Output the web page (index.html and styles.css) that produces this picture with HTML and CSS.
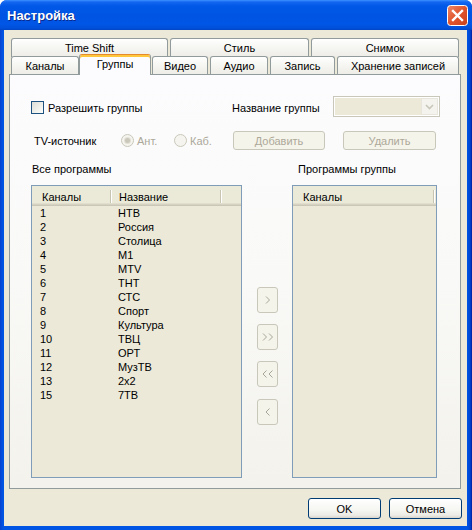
FILE: index.html
```html
<!DOCTYPE html>
<html>
<head>
<meta charset="utf-8">
<link rel="stylesheet" href="styles.css">
</head>
<body>
<div class="window">
  <div class="titlebar">
    <span class="title">Настройка</span>
    <div class="close">
      <svg width="21" height="21" viewBox="0 0 21 21">
        <defs>
          <linearGradient id="cg" x1="0" y1="0" x2="1" y2="1">
            <stop offset="0" stop-color="#EE8A6A"/>
            <stop offset="0.5" stop-color="#E0542C"/>
            <stop offset="1" stop-color="#C8401C"/>
          </linearGradient>
        </defs>
        <rect x="0.5" y="0.5" width="20" height="20" rx="3" fill="url(#cg)" stroke="#FFFFFF"/>
        <path d="M6 6 L15 15 M15 6 L6 15" stroke="#FFFFFF" stroke-width="2.4" stroke-linecap="square"/>
      </svg>
    </div>
  </div>
  <div class="client">
    <div class="tabs">
      <div class="tabrow row1">
        <div class="tab t-ts">Time Shift</div>
        <div class="tab t-style">Стиль</div>
        <div class="tab t-snap">Снимок</div>
      </div>
      <div class="tabrow row2">
        <div class="tab t-chan">Каналы</div>
        <div class="tab sel t-grp">Группы</div>
        <div class="tab t-vid">Видео</div>
        <div class="tab t-aud">Аудио</div>
        <div class="tab t-rec">Запись</div>
        <div class="tab t-store">Хранение записей</div>
      </div>
    </div>
    <div class="panel">
      <div class="row-a">
        <div class="chk-wrap"><span class="checkbox"></span><span>Разрешить группы</span></div>
        <div class="lbl-name">Название группы</div>
        <div class="combo">
          <div class="combo-field"></div>
          <div class="combo-btn">
            <svg width="9" height="6" viewBox="0 0 9 6"><polyline points="1,1 4.5,4.5 8,1" fill="none" stroke="#C9C7BA" stroke-width="1.6"/></svg>
          </div>
        </div>
      </div>
      <div class="row-b">
        <div class="tvsrc">TV-источник</div>
        <div class="radio r-ant"><span class="circle on"></span><span class="dis">Ант.</span></div>
        <div class="radio r-kab"><span class="circle"></span><span class="dis">Каб.</span></div>
        <div class="dbtn b-add">Добавить</div>
        <div class="dbtn b-del">Удалить</div>
      </div>
      <div class="row-c">
        <div class="lbl-all">Все программы</div>
        <div class="lbl-grp">Программы группы</div>
      </div>
      <div class="lists">
        <div class="list list-left">
          <div class="lhead">
            <div class="hc hc1">Каналы</div><div class="hsep"></div>
            <div class="hc hc2">Название</div><div class="hsep"></div>
          </div>
          <div class="lrow"><span>1</span><span>НТВ</span></div>
          <div class="lrow"><span>2</span><span>Россия</span></div>
          <div class="lrow"><span>3</span><span>Столица</span></div>
          <div class="lrow"><span>4</span><span>М1</span></div>
          <div class="lrow"><span>5</span><span>MTV</span></div>
          <div class="lrow"><span>6</span><span>ТНТ</span></div>
          <div class="lrow"><span>7</span><span>СТС</span></div>
          <div class="lrow"><span>8</span><span>Спорт</span></div>
          <div class="lrow"><span>9</span><span>Культура</span></div>
          <div class="lrow"><span>10</span><span>ТВЦ</span></div>
          <div class="lrow"><span>11</span><span>ОРТ</span></div>
          <div class="lrow"><span>12</span><span>МузТВ</span></div>
          <div class="lrow"><span>13</span><span>2x2</span></div>
          <div class="lrow"><span>15</span><span>7ТВ</span></div>
        </div>
        <div class="mid">
          <div class="abtn"><svg width="12" height="8" viewBox="0 0 12 8"><polyline points="4,0.5 7.5,4 4,7.5" fill="none" stroke="#A8A699" stroke-width="1"/></svg></div>
          <div class="abtn"><svg width="12" height="8" viewBox="0 0 12 8"><polyline points="1,0.5 4.5,4 1,7.5" fill="none" stroke="#A8A699" stroke-width="1"/><polyline points="7,0.5 10.5,4 7,7.5" fill="none" stroke="#A8A699" stroke-width="1"/></svg></div>
          <div class="abtn"><svg width="12" height="8" viewBox="0 0 12 8"><polyline points="4.5,0.5 1,4 4.5,7.5" fill="none" stroke="#A8A699" stroke-width="1"/><polyline points="10.5,0.5 7,4 10.5,7.5" fill="none" stroke="#A8A699" stroke-width="1"/></svg></div>
          <div class="abtn last"><svg width="12" height="8" viewBox="0 0 12 8"><polyline points="7.5,0.5 4,4 7.5,7.5" fill="none" stroke="#A8A699" stroke-width="1"/></svg></div>
        </div>
        <div class="list list-right">
          <div class="lhead">
            <div class="hc hc-r">Каналы</div><div class="hsep"></div>
          </div>
        </div>
      </div>
    </div>
    <div class="footer">
      <div class="btn">OK</div>
      <div class="btn">Отмена</div>
    </div>
  </div>
</div>
</body>
</html>
```
FILE: styles.css
```css
html, body {
  margin: 0;
  padding: 0;
  background: #FFFFFF;
}
body {
  font-family: "Liberation Sans", Arial, sans-serif;
  font-size: 11px;
  color: #000;
}
.window {
  width: 472px;
  height: 530px;
  display: flex;
  flex-direction: column;
  background: linear-gradient(to right, #0842CF 0, #0055E5 3px, #0055E5 467px, #0046D0 470px, #001EA0 472px);
  border-radius: 7px 7px 0 0;
  overflow: hidden;
}
.titlebar {
  height: 30px;
  flex: none;
  display: flex;
  align-items: center;
  justify-content: space-between;
  padding: 0 4px 0 7px;
  background: linear-gradient(to bottom, #3C92FF 0, #1466F0 2px, #0058E8 6px, #0054E3 16px, #0056E6 24px, #0050DA 28px, #0046C8 30px);
}
.title {
  color: #FFFFFF;
  font-weight: bold;
  font-size: 13px;
  text-shadow: 1px 1px 0 #0A2A8C;
  padding-top: 1px;
}
.close {
  width: 21px;
  height: 21px;
  margin-top: 1px;
}
.close svg { display: block; }
.client {
  flex: 1;
  margin: 0 5px 4px 4px;
  background: #ECE9D8;
  display: flex;
  flex-direction: column;
  padding-top: 8px;
}
.tabs {
  padding-left: 7px;
}
.tabrow {
  display: flex;
}
.row1 {
  height: 19px;
}
.row2 {
  height: 20px;
  margin-top: -3px;
  align-items: flex-end;
}
.tab {
  box-sizing: border-box;
  border: 1px solid #919B9C;
  border-bottom: none;
  border-radius: 3px 3px 0 0;
  background: linear-gradient(to bottom, #FFFFFF 0, #F7F7F4 40%, #EEEDE7 100%);
  display: flex;
  align-items: center;
  justify-content: center;
  white-space: nowrap;
}
.row1 .tab { height: 19px; padding-bottom: 1px; }
.row2 .tab { height: 18px; }
.t-ts { width: 157px; margin-right: 2px; }
.t-style { width: 139px; margin-right: 2px; }
.t-snap { width: 148px; }
.t-chan { width: 68px; }
.t-grp { width: 72px; margin-right: 1px; }
.t-vid { width: 56px; margin-right: 2px; }
.t-aud { width: 58px; margin-right: 2px; }
.t-rec { width: 65px; margin-right: 2px; }
.t-store { width: 122px; }
.row2 .tab.sel {
  height: 21px;
  margin-bottom: -1px;
  position: relative;
  z-index: 1;
  background: #FCFCFE;
  border-top: 1px solid #E68B2C;
  box-shadow: inset 0 2px 0 #FFC73C;
  padding-bottom: 3px;
}
.panel {
  margin-left: 5px;
  width: 452px;
  height: 415px;
  box-sizing: border-box;
  border: 1px solid #919B9C;
  background: linear-gradient(to bottom, #FCFCFE 0, #F9F9F7 50%, #F3F2EC 100%);
  padding: 21px 0 0 21px;
}
.row-a {
  display: flex;
  align-items: center;
  height: 21px;
}
.chk-wrap {
  width: 201px;
  display: flex;
  align-items: center;
  gap: 4px;
  padding-top: 2px;
}
.checkbox {
  width: 13px;
  height: 13px;
  box-sizing: border-box;
  border: 1px solid #1C5180;
  background: linear-gradient(135deg, #DCDCD7 0, #F0F0EC 60%, #FFFFFF 100%);
}
.lbl-name {
  width: 101px;
  padding-top: 2px;
}
.combo {
  width: 107px;
  height: 21px;
  box-sizing: border-box;
  border: 1px solid #C9C7BA;
  background: #FFFFFF;
  padding: 1px;
  display: flex;
}
.combo-field {
  flex: 1;
  background: #ECE9D8;
}
.combo-btn {
  width: 17px;
  box-sizing: border-box;
  border: 1px solid #E8E6DC;
  background: #F4F3EE;
  display: flex;
  align-items: center;
  justify-content: center;
}
.combo-btn svg { display: block; }
.row-b {
  display: flex;
  align-items: center;
  height: 19px;
  margin-top: 14px;
}
.tvsrc {
  width: 90px;
  box-sizing: border-box;
  padding-left: 3px;
}
.radio {
  display: flex;
  align-items: center;
  gap: 3px;
}
.r-ant { width: 53px; }
.r-kab { width: 59px; }
.circle {
  width: 13px;
  height: 13px;
  box-sizing: border-box;
  border-radius: 50%;
  border: 1px solid #CAC8BB;
  background: #F5F4EE;
  display: flex;
  align-items: center;
  justify-content: center;
}
.circle.on::after {
  content: "";
  width: 5px;
  height: 5px;
  border-radius: 50%;
  background: #CAC8BB;
  box-shadow: 0 0 0 1px #E2E0D6;
}
.dis { color: #ACA899; }
.dbtn {
  height: 19px;
  box-sizing: border-box;
  border: 1px solid #C9C7BA;
  border-radius: 3px;
  background: #F5F4EA;
  color: #ACA899;
  display: flex;
  align-items: center;
  justify-content: center;
}
.b-add { width: 92px; margin-right: 18px; }
.b-del { width: 93px; }
.row-c {
  display: flex;
  height: 13px;
  margin-top: 12px;
  align-items: center;
}
.lbl-all {
  width: 267px;
  box-sizing: border-box;
  padding-left: 1px;
}
.lists {
  display: flex;
  margin-top: 10px;
  height: 293px;
}
.list {
  box-sizing: border-box;
  border: 1px solid #7F9DB9;
  background: #ECE9D8;
  height: 293px;
}
.list-left { width: 211px; }
.list-right { width: 145px; }
.lhead {
  height: 20px;
  display: flex;
  align-items: center;
  background: #EBEAD8;
  box-shadow: inset 0 -1px 0 #CBC7B8, inset 0 -2px 0 #D6D2C2, inset 0 -3px 0 #E2DECD;
  padding: 1px 0 0 0;
  box-sizing: border-box;
}
.hc {
  box-sizing: border-box;
  white-space: nowrap;
}
.hc1 { width: 78px; padding-left: 10px; }
.hc2 { width: 108px; padding-left: 7px; }
.hc-r { width: 140px; padding-left: 10px; }
.hsep {
  width: 1px;
  height: 13px;
  background: #C7C5B2;
  border-right: 1px solid #FFFFFF;
}
.lrow {
  display: grid;
  grid-template-columns: 78px 1fr;
  padding-left: 8px;
  height: 14px;
  line-height: 14px;
}
.mid {
  width: 50px;
  box-sizing: border-box;
  padding: 102px 0 0 15px;
  display: flex;
  flex-direction: column;
  gap: 11px;
}
.abtn {
  width: 21px;
  height: 26px;
  box-sizing: border-box;
  border: 1px solid #C9C7BA;
  border-radius: 3px;
  background: #F5F4EA;
  display: flex;
  align-items: center;
  justify-content: center;
}
.abtn.last { margin-top: 1px; }
.abtn svg { display: block; }
.footer {
  display: flex;
  justify-content: flex-end;
  gap: 8px;
  margin-top: 9px;
  padding-right: 5px;
}
.btn {
  width: 73px;
  height: 21px;
  box-sizing: border-box;
  border: 1px solid #003C74;
  border-radius: 3px;
  background: linear-gradient(to bottom, #FFFFFF 0, #F5F5F1 60%, #ECEBE5 85%, #D8D4CA 100%);
  display: flex;
  align-items: center;
  justify-content: center;
}
```
